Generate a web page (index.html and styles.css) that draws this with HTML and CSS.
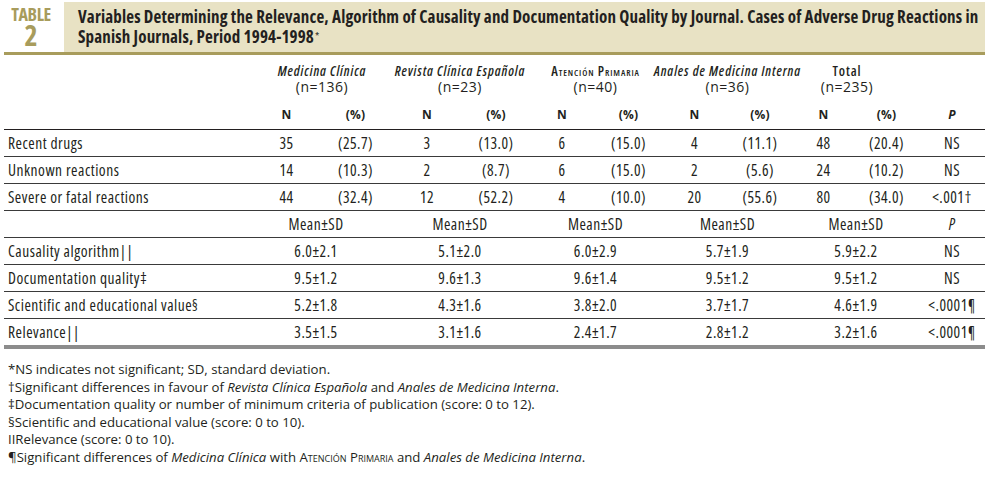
FILE: index.html
```html
<!DOCTYPE html>
<html lang="en">
<head>
<meta charset="utf-8">
<title>Table 2</title>
<link rel="stylesheet" href="styles.css">
</head>
<body>
<div class="page">
  <header class="caption">
    <div class="caption-label">
      <span class="caption-word">TABLE</span>
      <span class="caption-num">2</span>
    </div>
    <h1 class="caption-title">Variables Determining the Relevance, Algorithm of Causality and Documentation Quality by Journal. Cases of Adverse Drug Reactions in<br>Spanish Journals, Period 1994-1998<span class="ast">*</span></h1>
  </header>

  <table class="data">
    <colgroup>
      <col class="w-label">
      <col class="w67"><col class="w71">
      <col class="w72"><col class="w66">
      <col class="w66"><col class="w67">
      <col class="w65"><col class="w66">
      <col class="w61"><col class="w65">
      <col class="w66">
    </colgroup>
    <thead>
      <tr class="groups">
        <th></th>
        <th colspan="2"><div class="group"><em>Medicina Clínica</em><span class="n">(n=136)</span></div></th>
        <th colspan="2"><div class="group"><em>Revista Clínica Española</em><span class="n">(n=23)</span></div></th>
        <th colspan="2"><div class="group"><span class="sc">Atención Primaria</span><span class="n">(n=40)</span></div></th>
        <th colspan="2"><div class="group"><em>Anales de Medicina Interna</em><span class="n">(n=36)</span></div></th>
        <th colspan="2"><div class="group group-total"><span class="tot">Total</span><span class="n">(n=235)</span></div></th>
        <th></th>
      </tr>
      <tr class="subs">
        <th></th>
        <th>N</th><th>(%)</th>
        <th>N</th><th>(%)</th>
        <th>N</th><th>(%)</th>
        <th>N</th><th>(%)</th>
        <th>N</th><th>(%)</th>
        <th><em>P</em></th>
      </tr>
    </thead>
    <tbody>
      <tr>
        <td class="label">Recent drugs</td>
        <td>35</td><td>(25.7)</td>
        <td>3</td><td>(13.0)</td>
        <td>6</td><td>(15.0)</td>
        <td>4</td><td>(11.1)</td>
        <td>48</td><td>(20.4)</td>
        <td>NS</td>
      </tr>
      <tr>
        <td class="label">Unknown reactions</td>
        <td>14</td><td>(10.3)</td>
        <td>2</td><td>(8.7)</td>
        <td>6</td><td>(15.0)</td>
        <td>2</td><td>(5.6)</td>
        <td>24</td><td>(10.2)</td>
        <td>NS</td>
      </tr>
      <tr>
        <td class="label">Severe or fatal reactions</td>
        <td>44</td><td>(32.4)</td>
        <td>12</td><td>(52.2)</td>
        <td>4</td><td>(10.0)</td>
        <td>20</td><td>(55.6)</td>
        <td>80</td><td>(34.0)</td>
        <td>&lt;.001†</td>
      </tr>
      <tr>
        <td class="label"></td>
        <td colspan="2" class="m1">Mean±SD</td>
        <td colspan="2">Mean±SD</td>
        <td colspan="2">Mean±SD</td>
        <td colspan="2">Mean±SD</td>
        <td colspan="2">Mean±SD</td>
        <td><em>P</em></td>
      </tr>
      <tr>
        <td class="label">Causality algorithm||</td>
        <td colspan="2" class="m1">6.0±2.1</td>
        <td colspan="2">5.1±2.0</td>
        <td colspan="2">6.0±2.9</td>
        <td colspan="2">5.7±1.9</td>
        <td colspan="2">5.9±2.2</td>
        <td>NS</td>
      </tr>
      <tr>
        <td class="label">Documentation quality‡</td>
        <td colspan="2" class="m1">9.5±1.2</td>
        <td colspan="2">9.6±1.3</td>
        <td colspan="2">9.6±1.4</td>
        <td colspan="2">9.5±1.2</td>
        <td colspan="2">9.5±1.2</td>
        <td>NS</td>
      </tr>
      <tr>
        <td class="label">Scientific and educational value§</td>
        <td colspan="2" class="m1">5.2±1.8</td>
        <td colspan="2">4.3±1.6</td>
        <td colspan="2">3.8±2.0</td>
        <td colspan="2">3.7±1.7</td>
        <td colspan="2">4.6±1.9</td>
        <td>&lt;.0001¶</td>
      </tr>
      <tr>
        <td class="label">Relevance||</td>
        <td colspan="2" class="m1">3.5±1.5</td>
        <td colspan="2">3.1±1.6</td>
        <td colspan="2">2.4±1.7</td>
        <td colspan="2">2.8±1.2</td>
        <td colspan="2">3.2±1.6</td>
        <td>&lt;.0001¶</td>
      </tr>
    </tbody>
  </table>

  <div class="notes">
    <p>*NS indicates not significant; SD, standard deviation.</p>
    <p>†Significant differences in favour of <em>Revista Clínica Española</em> and <em>Anales de Medicina Interna</em>.</p>
    <p>‡Documentation quality or number of minimum criteria of publication (score: 0 to 12).</p>
    <p>§Scientific and educational value (score: 0 to 10).</p>
    <p>IIRelevance (score: 0 to 10).</p>
    <p>¶Significant differences of <em>Medicina Clínica</em> with <span class="sc">Atención Primaria</span> and <em>Anales de Medicina Interna</em>.</p>
  </div>
</div>
</body>
</html>
```

FILE: styles.css
```css
:root {
  --narrow: "Open Sans", "Liberation Sans", sans-serif;
  --ink: #231f20;
  --olive: #a89c5c;
  --beige: #e8e2c4;
}

body {
  margin: 0;
  background: #ffffff;
  color: var(--ink);
  font-family: var(--narrow);
  font-stretch: 75%;
}

.page {
  width: 981px;
  padding: 2px 0 0 4px;
}

/* caption */
.caption {
  display: flex;
  height: 50px;
  border-bottom: 3px solid var(--olive);
}

.caption-label {
  width: 54px;
  margin-right: 6px;
  display: flex;
  flex-direction: column;
  align-items: center;
  color: var(--olive);
  font-weight: bold;
}

.caption-word {
  font-size: 18px;
  line-height: 18px;
  letter-spacing: -0.4px;
  margin-top: 3px;
}

.caption-num {
  font-size: 28px;
  line-height: 24px;
}

.caption-title {
  flex: 1;
  margin: 0;
  background: var(--beige);
  padding: 5px 0 0 14px;
  font-size: 17px;
  line-height: 19px;
  font-weight: bold;
  letter-spacing: 0.15px;
  white-space: nowrap;
}

.ast {
  font-size: 11px;
  font-weight: normal;
  vertical-align: 3px;
  margin-left: 1px;
}

/* table */
.data {
  width: 981px;
  border-collapse: collapse;
  table-layout: fixed;
  font-size: 15.5px;
  letter-spacing: 0.5px;
}

.w-label { width: 249px; }
.w61 { width: 61px; }
.w65 { width: 65px; }
.w66 { width: 66px; }
.w67 { width: 67px; }
.w71 { width: 71px; }
.w72 { width: 72px; }

.data th,
.data td {
  padding: 0;
  text-align: center;
  white-space: nowrap;
}

.groups th {
  height: 37px;
  vertical-align: top;
  padding-top: 8px;
  font-weight: normal;
}

.group {
  display: flex;
  flex-direction: column;
  align-items: center;
  font-size: 13.5px;
  line-height: 16px;
}

.group em,
.group .sc,
.group .tot {
  font-weight: 600;
  letter-spacing: 0.9px;
}

.group em {
  font-style: italic;
}

.group .n {
  font-size: 14px;
  font-stretch: 90%;
  letter-spacing: 0.5px;
}

.group-total {
  padding-right: 18px;
}

.sc {
  font-variant: small-caps;
}

.subs th {
  height: 29px;
  font-size: 12px;
  font-weight: bold;
  font-stretch: 90%;
  letter-spacing: 0.2px;
  border-bottom: 1px solid var(--ink);
}

.data td {
  height: 26px;
  border-bottom: 1px solid #3a3a3a;
}

.data tbody tr:last-child td {
  border-bottom: 4px solid #8c8c8c;
}

.data td.label {
  text-align: left;
  padding-left: 4px;
}

.data td.m1 {
  padding-right: 12px;
}

/* notes */
.notes {
  margin-top: 12px;
  padding-left: 4px;
  font-size: 13.2px;
  font-stretch: 90%;
  line-height: 17.5px;
}

.notes p {
  margin: 0;
}
```
